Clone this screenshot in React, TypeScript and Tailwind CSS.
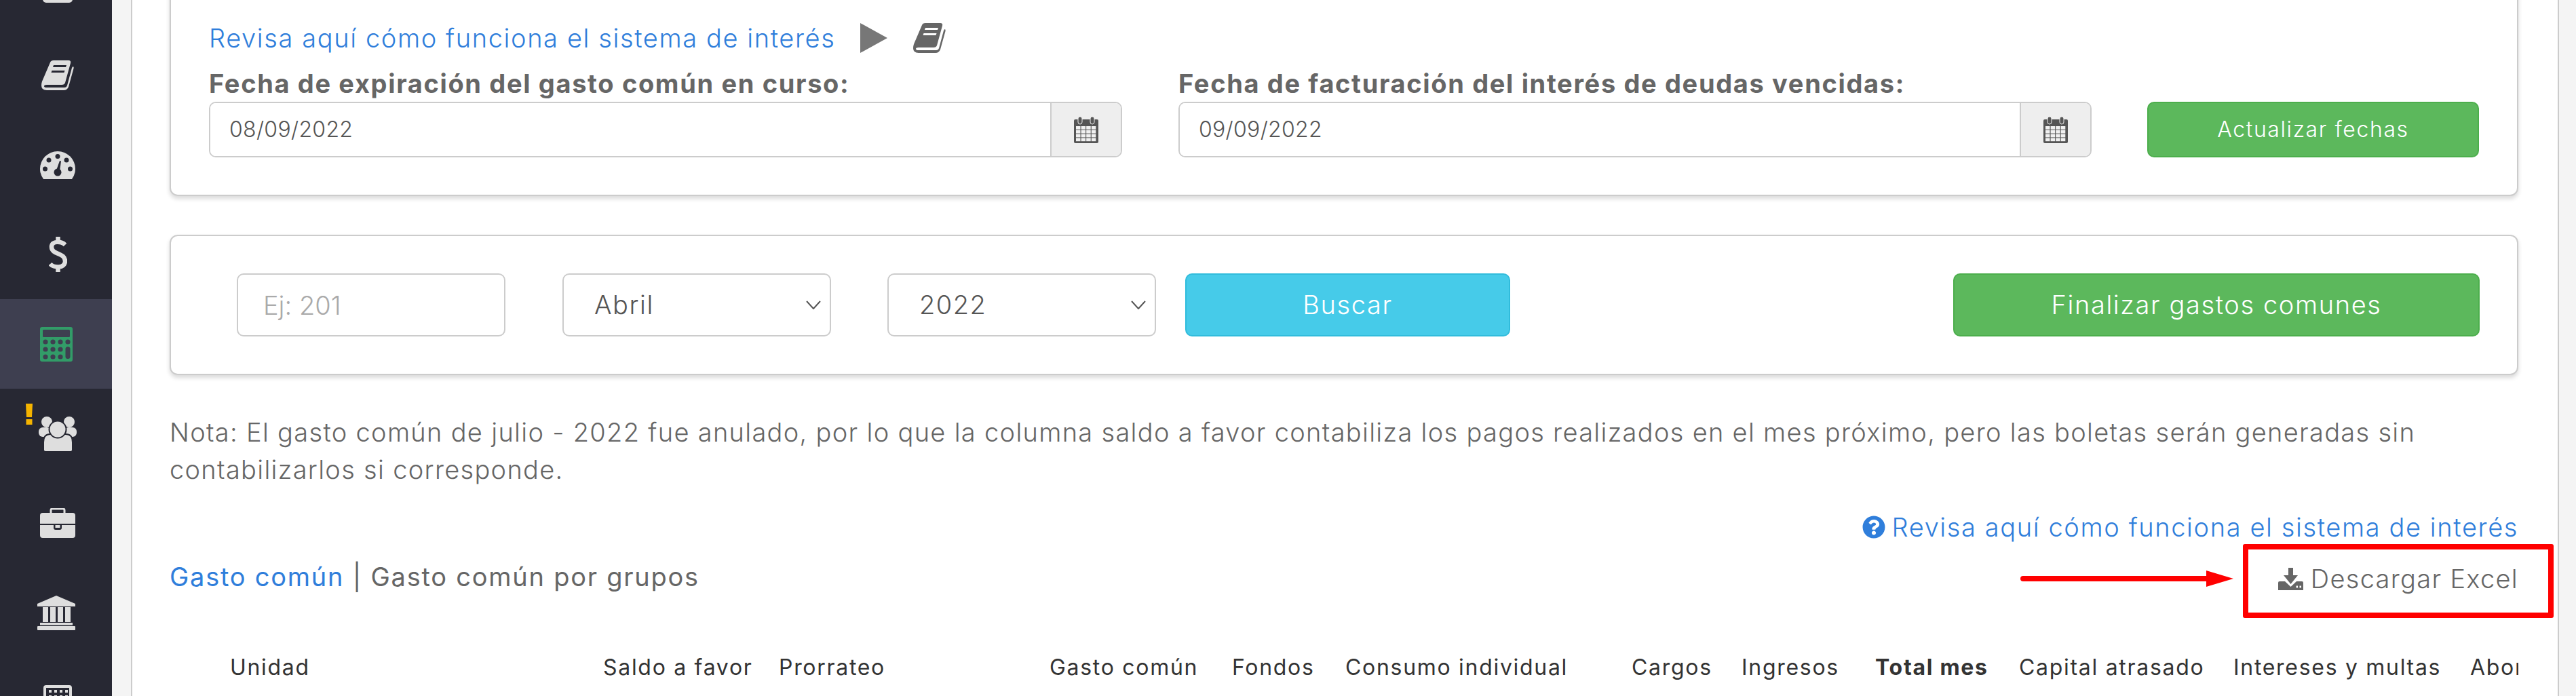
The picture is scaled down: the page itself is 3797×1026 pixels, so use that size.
import React from "react";
import { FaQuestionCircle } from "react-icons/fa";

const SIDE = "#272833";
const ACTIVE = "#3e3f50";
const ICON = "#dedede";

const BookIcon = ({ color, className }: { color: string; className: string }) => (
  <svg viewBox="0 0 48 44" className={className}>
    <path
      fill={color}
      fillRule="evenodd"
      d="M13 3Q14 0 18 0H40Q44 0 43 4L35 33Q34 36 30 36H8Q4 36 4 38Q4 40 8 40H34Q37 40 38 37L45 11Q46 9 47 9Q48 10 47.5 12L40 39Q38 44 33 44H8Q0 44 0 37Q0 34 1 31ZM18 7L17 10H36L37 7ZM15.500 15L14.500 18H33.500L34.500 15Z"
    />
  </svg>
);

const GaugeIcon = () => (
  <svg viewBox="0 0 52 41" className="w-[52px] h-[41px]">
    <path fill={ICON} d="M5 41Q0 34 0 26A26 26 0 0 1 52 26Q52 34 47 41Z" />
    <g fill={SIDE}>
      <circle cx="26" cy="7.500" r="3.500" />
      <circle cx="13" cy="13" r="3.500" />
      <circle cx="39" cy="13" r="3.500" />
      <circle cx="7.500" cy="26" r="3.500" />
      <circle cx="44.500" cy="26" r="3.500" />
      <circle cx="26" cy="31" r="5.500" />
      <path d="M24 28L29 14L31 14.500L29 29Z" />
    </g>
  </svg>
);

const DollarIcon = () => (
  <svg viewBox="0 0 27 52" className="w-[27px] h-[52px]" fill="none" stroke={ICON} strokeWidth="6.500">
    <path d="M13.500 0V8M13.500 44V52" />
    <path d="M24 12C19 7 4 5 4 15C4 27 24 23 24 36C24 47 7 46 2 40" />
  </svg>
);

const CalculatorIcon = () => {
  const xs = [8, 19, 30, 41];
  const ys = [22, 33, 44];
  return (
    <svg viewBox="0 0 48 51" className="w-[48px] h-[51px] mr-[4px]">
      <rect width="48" height="51" rx="3" fill="#329c68" />
      <g fill={ACTIVE}>
        <rect x="4" y="4" width="40" height="11" rx="1.500" />
        {ys.map((y) =>
          xs.slice(0, 3).map((x) => <circle key={`${x}-${y}`} cx={x} cy={y} r="3.600" />)
        )}
        <circle cx="41" cy="22" r="3.600" />
        <rect x="37.500" y="29" width="7" height="18" rx="3.500" />
      </g>
    </svg>
  );
};

const UsersIcon = () => (
  <svg viewBox="0 0 56 51" className="w-[56px] h-[51px]">
    <g fill={ICON}>
      <circle cx="12" cy="8" r="8" />
      <circle cx="45" cy="8" r="8" />
      <rect x="0" y="16" width="18" height="14" rx="6" />
      <rect x="38" y="16" width="18" height="14" rx="6" />
    </g>
    <g fill={ICON} stroke={SIDE} strokeWidth="2">
      <path d="M7 51V38Q7 26 17 26H40Q50 26 50 38V51Z" />
      <circle cx="28" cy="19" r="12.500" />
    </g>
    <rect x="8" y="47" width="41" height="4" rx="2" fill={ICON} />
  </svg>
);

const BriefcaseIcon = () => (
  <svg viewBox="0 0 52 44" className="w-[52px] h-[44px]">
    <rect x="16" y="1" width="20" height="9" rx="2" fill="none" stroke={ICON} strokeWidth="3" />
    <path fill={ICON} d="M0 11Q0 7 4 7H48Q52 7 52 11V23H0Z" />
    <path fill={ICON} d="M0 25H20V29Q20 32 23 32H29Q32 32 32 29V25H52V40Q52 44 48 44H4Q0 44 0 40Z" />
    <rect x="22.500" y="25" width="7" height="4" fill={ICON} />
  </svg>
);

const BankIcon = () => (
  <svg viewBox="0 0 56 51" className="w-[56px] h-[51px] mr-[4px]" fill={ICON}>
    <path d="M28 0L56 12V16H0V12Z" />
    <rect x="8" y="17" width="8" height="22" />
    <rect x="19" y="17" width="8" height="22" />
    <rect x="30" y="17" width="8" height="22" />
    <rect x="41" y="17" width="8" height="22" />
    <rect x="4" y="40" width="48" height="3.500" />
    <rect x="0" y="45" width="56" height="6" rx="1" />
  </svg>
);

const BoxIcon = () => (
  <svg viewBox="0 0 44 50" className="w-[44px] h-[50px]">
    <rect x="2" y="2" width="40" height="46" rx="3" fill="none" stroke={ICON} strokeWidth="4" />
  </svg>
);

const KeypadIcon = () => (
  <svg viewBox="0 0 42 50" className="w-[42px] h-[50px]">
    <rect x="2" y="2" width="38" height="46" rx="2" fill="none" stroke={ICON} strokeWidth="4" />
    <g fill={ICON}>
      {[8, 16, 24, 32].map((x) => (
        <rect key={x} x={x} y="7" width="4" height="4" />
      ))}
      {[8, 16, 24, 32].map((x) => (
        <rect key={x} x={x} y="15" width="4" height="4" />
      ))}
    </g>
  </svg>
);

const CalendarIcon = () => {
  const cols = [0, 1, 2, 3];
  const rows = [0, 1, 2, 3];
  return (
    <svg viewBox="0 0 36 39" className="w-[36px] h-[39px]">
      <rect x="0" y="4" width="36" height="35" rx="2" fill="#555555" />
      <rect x="6" y="0" width="6" height="11" rx="3" fill="#555555" stroke="#eeeeee" strokeWidth="1" />
      <rect x="24" y="0" width="6" height="11" rx="3" fill="#555555" stroke="#eeeeee" strokeWidth="1" />
      {rows.map((r) =>
        cols.map((c) => (
          <rect key={`${r}-${c}`} x={3 + c * 7.6} y={14 + r * 5.8} width="6.500" height="4.800" fill="#f0f0f0" />
        ))
      )}
    </svg>
  );
};

const DownloadIcon = () => (
  <svg viewBox="0 0 37 33" className="w-[37px] h-[33px] shrink-0" fill="#666666">
    <path d="M15 0H22V11H29L18.500 24L8 11H15Z" />
    <path
      fillRule="evenodd"
      d="M2 20H10L18.500 28L27 20H35Q37 20 37 22V33H0V22Q0 20 2 20ZM26.500 26.500V29.500H29V26.500ZM31.500 26.500V29.500H34V26.500Z"
    />
  </svg>
);

const Chevron = () => (
  <svg viewBox="0 0 22 13" className="w-[22px] h-[13px]" fill="none" stroke="#555555" strokeWidth="2">
    <path d="M1 1L11 12L21 1" />
  </svg>
);

const DateField = ({ label, value }: { label: string; value: string }) => (
  <div className="w-[1346px] shrink-0">
    <div className="h-[46px] text-[38px] leading-[38px] font-bold text-[#666666] tracking-[1.65px] whitespace-nowrap">
      {label}
    </div>
    <div className="flex h-[82px] border-2 border-[#cccccc] rounded-[10px] overflow-hidden">
      <input
        readOnly
        value={value}
        className="flex-1 min-w-0 px-[28px] text-[32px] tracking-[0.3px] font-light text-[#555555] outline-none bg-white"
      />
      <div className="w-[104px] flex items-center justify-center bg-[#eeeeee] border-l-2 border-[#cccccc]">
        <CalendarIcon />
      </div>
    </div>
  </div>
);

const SelectBox = ({ value }: { value: string }) => (
  <div className="w-[396px] h-[93px] shrink-0 flex items-center justify-between pl-[45px] pr-[13px] border-2 border-[#cccccc] rounded-[10px] text-[38px] tracking-[1.5px] font-light text-[#555555]">
    <span>{value}</span>
    <Chevron />
  </div>
);

const columns = [
  { label: "Unidad", width: 550 },
  { label: "Saldo a favor", width: 259 },
  { label: "Prorrateo", width: 399 },
  { label: "Gasto común", width: 269 },
  { label: "Fondos", width: 167 },
  { label: "Consumo individual", width: 422 },
  { label: "Cargos", width: 162 },
  { label: "Ingresos", width: 197 },
  { label: "Total mes", width: 212, bold: true },
  { label: "Capital atrasado", width: 316 },
  { label: "Intereses y multas", width: 349 },
  { label: "Abonos", width: 200 },
];

const App = () => {
  return (
    <div className="flex w-[3797px] h-[1026px] overflow-hidden bg-white font-['Inter',sans-serif]">
      <aside className="w-[165px] shrink-0 bg-[#272833] -mt-[87px] h-[1300px]">
        {[BoxIcon, BookIcon, GaugeIcon, DollarIcon, CalculatorIcon, UsersIcon, BriefcaseIcon, BankIcon, KeypadIcon].map(
          (Icon, i) => (
            <div
              key={i}
              className={`relative h-[132px] flex items-center justify-center pl-[5px] ${i === 4 ? "bg-[#3e3f50]" : ""}`}
            >
              {i === 1 ? <BookIcon color={ICON} className="w-[48px] h-[44px]" /> : <Icon color="" className="" />}
              {i === 5 && (
                <svg viewBox="0 0 10 31" className="absolute left-[38px] top-[22px] w-[10px] h-[31px]" fill="#f5b400">
                  <path d="M0 0H10L9 20H1Z" />
                  <rect x="0.500" y="23" width="9" height="8" />
                </svg>
              )}
            </div>
          )
        )}
      </aside>
      <div className="w-[30px] shrink-0 bg-[#f4f4f4] border-r-2 border-[#cccccc]" />

      <main className="relative w-[3575px] shrink-0 pl-[55px] pr-[58px]">
        {/* fechas */}
        <section className="-mt-[20px] h-[309px] bg-white border-2 border-[#cccccc] rounded-[12px] shadow-[0_4px_6px_rgba(0,0,0,0.15)] pt-[26px] pl-[56px] pr-[55px]">
          <div className="h-[96px] flex items-center text-[38px] tracking-[1.6px] font-light text-[#2f7edb] whitespace-nowrap">
            <a className="w-[960px]">Revisa aquí cómo funciona el sistema de interés</a>
            <svg viewBox="0 0 40 44" className="w-[40px] h-[44px] ml-[0px]" fill="#777777">
              <path d="M0 0L40 22L0 44Z" />
            </svg>
            <BookIcon color="#666666" className="w-[48px] h-[44px] ml-[38px]" />
          </div>
          <div className="flex items-end">
            <DateField label="Fecha de expiración del gasto común en curso:" value="08/09/2022" />
            <div className="ml-[83px]">
              <DateField label="Fecha de facturación del interés de deudas vencidas:" value="09/09/2022" />
            </div>
            <button className="ml-[82px] w-[489px] h-[82px] shrink-0 bg-[#5cb85c] border-2 border-[#4cae4c] rounded-[10px] text-[32px] tracking-[1.6px] font-light text-white">
              Actualizar fechas
            </button>
          </div>
        </section>

        {/* filtros */}
        <section className="mt-[57px] h-[207px] flex items-start bg-white border-2 border-[#cccccc] rounded-[12px] shadow-[0_4px_6px_rgba(0,0,0,0.15)] pt-[55px] pl-[97px] pr-[55px]">
          <input
            placeholder="Ej: 201"
            className="w-[396px] h-[93px] shrink-0 px-[37px] border-2 border-[#cccccc] rounded-[10px] text-[38px] font-light text-[#555555] placeholder:text-[#aaaaaa] outline-none"
          />
          <div className="ml-[84px]">
            <SelectBox value="Abril" />
          </div>
          <div className="ml-[83px]">
            <SelectBox value="2022" />
          </div>
          <button className="ml-[43px] w-[479px] h-[93px] shrink-0 bg-[#46cbe9] border-2 border-[#31bcdc] rounded-[10px] text-[38px] tracking-[1.6px] font-light text-white">
            Buscar
          </button>
          <button className="ml-auto w-[776px] h-[93px] shrink-0 bg-[#5cb85c] border-2 border-[#4cae4c] rounded-[10px] text-[38px] tracking-[1.6px] font-light text-white">
            Finalizar gastos comunes
          </button>
        </section>

        <p className="mt-[57px] text-[38px] leading-[55px] tracking-[1.3px] font-light text-[#666666] whitespace-nowrap">
          Nota: El gasto común de julio - 2022 fue anulado, por lo que la columna saldo a favor contabiliza los pagos
          realizados en el mes próximo, pero las boletas serán generadas sin
          <br />
          contabilizarlos si corresponde.
        </p>

        <div className="mt-[33px] h-[48px] flex items-center justify-end gap-[10px] text-[38px] tracking-[1.6px] font-light text-[#2f7edb]">
          <FaQuestionCircle className="w-[34px] h-[34px]" />
          <a>Revisa aquí cómo funciona el sistema de interés</a>
        </div>

        <div className="h-[98px] flex items-center justify-between text-[38px]">
          <div className="text-[#666666] tracking-[1.75px] font-normal">
            <a className="text-[#2f7edb]">Gasto común</a> | Gasto común por grupos
          </div>
          <div className="flex items-center gap-[11px] font-light tracking-[1.3px] text-[#666666] mt-[6px]">
            <DownloadIcon />
            <span>Descargar Excel</span>
          </div>
        </div>

        <div className="mt-[61px] flex h-[44px] overflow-hidden text-[32px] tracking-[1.7px] text-[#333333] whitespace-nowrap">
          <div className="w-[89px] shrink-0" />
          {columns.map((c) => (
            <div key={c.label} className={`shrink-0 ${c.bold ? "font-bold" : ""}`} style={{ width: c.width }}>
              {c.label}
            </div>
          ))}
        </div>

        {/* anotaciones */}
        <div className="absolute left-[3111px] top-[802px] w-[458px] h-[109px] border-[8px] border-[#ff0000] rounded-[3px]" />
        <svg viewBox="0 0 314 24" className="absolute left-[2783px] top-[841px] w-[314px] h-[24px]" fill="#ff0000">
          <path d="M4 8H274V0L314 12L274 24V16H4Q0 16 0 12Q0 8 4 8Z" />
        </svg>
      </main>

      <div className="w-[27px] shrink-0 bg-[#f4f4f4] border-l-2 border-[#cccccc]" />
    </div>
  );
};

export default App;
